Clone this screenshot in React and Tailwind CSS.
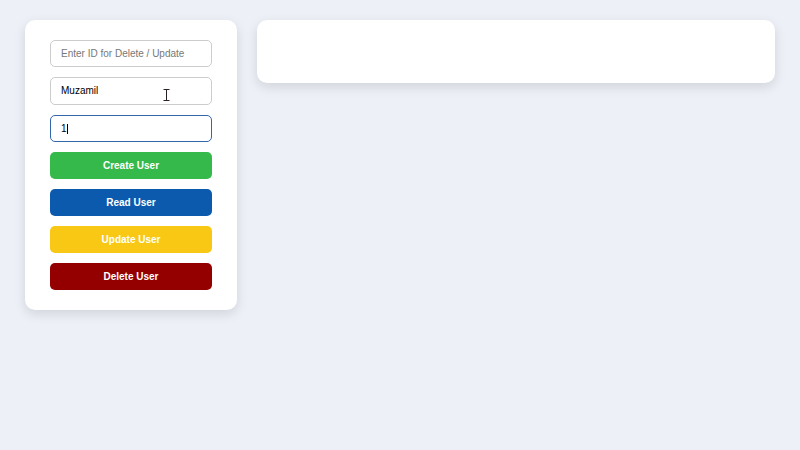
import React from 'react';

const buttons = [
  { label: 'Create User', color: 'bg-[#34b94a]' },
  { label: 'Read User', color: 'bg-[#0b5aad]' },
  { label: 'Update User', color: 'bg-[#f8c815]' },
  { label: 'Delete User', color: 'bg-[#940000]' },
];

export default function App() {
  return (
    <div className="min-h-screen bg-[#edf0f7] px-[25px] pt-[20px] flex items-start gap-[20px] font-['Liberation_Sans',Arial,sans-serif]">
      <div className="w-[212px] bg-white rounded-[10px] shadow-[0_4px_12px_rgba(0,0,0,0.12)] px-[25px] py-[20px] flex flex-col gap-[10px]">
        <input
          placeholder="Enter ID for Delete / Update"
          className="h-[27.33px] w-full rounded-[5px] border border-[#cccccc] px-[10px] text-[10px] text-black placeholder:text-[#777777] outline-none"
        />
        <div className="relative">
          <input
            defaultValue="Muzamil"
            className="h-[27.33px] w-full rounded-[5px] border border-[#cccccc] px-[10px] text-[10px] text-black outline-none"
          />
          {/* mouse text cursor */}
          <svg className="absolute left-[113px] top-[12px]" width="7" height="12" viewBox="0 0 7 12">
            <path d="M0.5 0.5h6M0.5 11.5h6M3.5 0.5v11" stroke="#2a2222" strokeWidth="1" fill="none" />
          </svg>
        </div>
        <div className="relative">
          <input
            defaultValue="1"
            className="h-[27.33px] w-full rounded-[5px] border border-[#3367ab] px-[10px] text-[10px] text-black outline-none"
          />
          <span className="absolute left-[17px] top-[9px] w-px h-[10px] bg-black" />
        </div>
        {buttons.map((b) => (
          <button
            key={b.label}
            className={`h-[27px] w-full rounded-[5px] ${b.color} text-white text-[10px] font-bold`}
          >
            {b.label}
          </button>
        ))}
      </div>
      <div className="flex-1 h-[63px] bg-white rounded-[10px] shadow-[0_4px_12px_rgba(0,0,0,0.12)]" />
    </div>
  );
}
